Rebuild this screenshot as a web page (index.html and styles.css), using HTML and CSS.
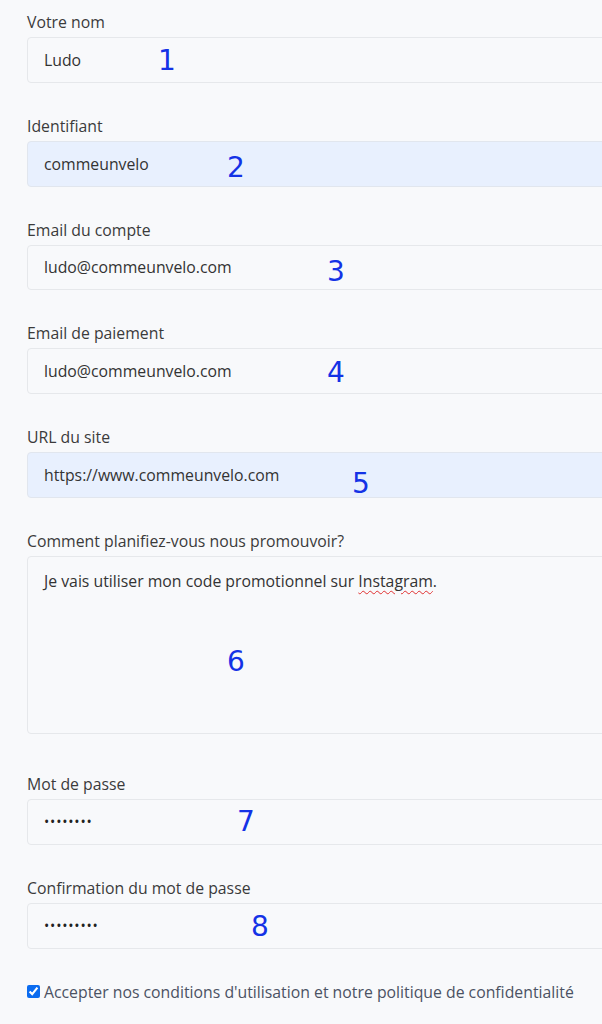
FILE: index.html
```html
<!DOCTYPE html>
<html lang="fr">
<head>
<meta charset="utf-8">
<title>Inscription</title>
<link rel="stylesheet" href="styles.css">
</head>
<body>
<main class="form">
  <div class="field">
    <label class="label" for="nom">Votre nom</label>
    <input class="input" id="nom" type="text" value="Ludo">
  </div>
  <div class="field">
    <label class="label" for="ident">Identifiant</label>
    <input class="input filled" id="ident" type="text" value="commeunvelo">
  </div>
  <div class="field">
    <label class="label" for="email">Email du compte</label>
    <input class="input" id="email" type="text" value="ludo@commeunvelo.com">
  </div>
  <div class="field">
    <label class="label" for="pay">Email de paiement</label>
    <input class="input" id="pay" type="text" value="ludo@commeunvelo.com">
  </div>
  <div class="field">
    <label class="label" for="url">URL du site</label>
    <input class="input filled" id="url" type="text" value="https://www.commeunvelo.com">
  </div>
  <div class="field field-area">
    <span class="label">Comment planifiez-vous nous promouvoir?</span>
    <div class="textarea">Je vais utiliser mon code promotionnel sur <span class="spell">Instagram</span>.</div>
  </div>
  <div class="field">
    <label class="label" for="pw">Mot de passe</label>
    <input class="input" id="pw" type="password" value="abcdefgh">
  </div>
  <div class="field">
    <label class="label" for="pw2">Confirmation du mot de passe</label>
    <input class="input" id="pw2" type="password" value="abcdefghi">
  </div>
  <label class="accept">
    <input class="check" type="checkbox" checked>
    <span>Accepter nos conditions d'utilisation et notre politique de confidentialité</span>
  </label>

  <span class="num n1">1</span>
  <span class="num n2">2</span>
  <span class="num n3">3</span>
  <span class="num n4">4</span>
  <span class="num n5">5</span>
  <span class="num n6">6</span>
  <span class="num n7">7</span>
  <span class="num n8">8</span>
</main>
</body>
</html>
```
FILE: styles.css
```css
html, body {
  margin: 0;
  padding: 0;
  background: #f8f9fb;
  overflow: hidden;
}
body {
  font-family: "Open Sans", "Noto Sans", sans-serif;
  color: #333;
  width: 602px;
  height: 1024px;
}
.form {
  position: relative;
  padding: 12px 0 0 27px;
  display: flex;
  flex-direction: column;
  gap: 33px;
}
.field {
  display: flex;
  flex-direction: column;
  gap: 5px;
}
.label {
  font-size: 15.8px;
  line-height: 21px;
  color: #3b3b3b;
  height: 20px;
}
.input {
  box-sizing: border-box;
  width: 620px;
  height: 45.8px;
  margin: 0;
  padding: 0 16px;
  border: 1.5px solid #e6e8eb;
  border-radius: 4px;
  background: #f8f9fb;
  font-family: "Open Sans", "Noto Sans", sans-serif;
  font-size: 15.8px;
  color: #333;
  outline: none;
}
.input.filled {
  background: #e8f0fe;
  border-color: #e1e6ee;
}
.input[type="password"] {
  font-size: 14px;
  letter-spacing: 0.8px;
  color: #222;
}
.textarea {
  box-sizing: border-box;
  width: 620px;
  height: 178px;
  padding: 13px 16px;
  border: 1.5px solid #e6e8eb;
  border-radius: 4px;
  background: #f8f9fb;
  font-size: 15.8px;
  line-height: 22px;
  color: #333;
}
.field-area {
  margin-bottom: 7px;
}
.spell {
  text-decoration: underline wavy #e03030;
  text-decoration-thickness: 1px;
  text-underline-offset: 3px;
}
.accept {
  display: flex;
  align-items: center;
  gap: 4px;
  font-size: 15.8px;
  line-height: 20px;
  color: #4b5263;
}
.check {
  margin: 0;
  width: 13px;
  height: 13px;
  accent-color: #0b6cf0;
}
.num {
  position: absolute;
  font-family: "DejaVu Sans", sans-serif;
  font-size: 28px;
  line-height: 30px;
  color: #1432e6;
}
.n1 { left: 158px; top: 46px; }
.n2 { left: 227px; top: 153px; }
.n3 { left: 327px; top: 257px; }
.n4 { left: 327px; top: 358px; }
.n5 { left: 352px; top: 469px; }
.n6 { left: 227px; top: 647px; }
.n7 { left: 237px; top: 807px; }
.n8 { left: 251px; top: 912px; }
```
